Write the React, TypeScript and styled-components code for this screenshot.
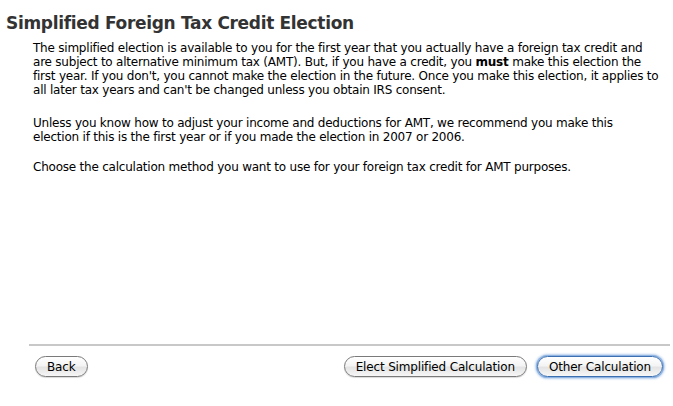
import React from 'react';
import styled, { createGlobalStyle } from 'styled-components';

const GlobalStyle = createGlobalStyle`
  html, body {
    margin: 0;
    padding: 0;
    background: #ffffff;
  }
  body {
    font-family: "DejaVu Sans", "Liberation Sans", sans-serif;
    color: #000;
  }
`;

const Page = styled.div`
  width: 673px;
  height: 406px;
  display: flex;
  flex-direction: column;
  box-sizing: border-box;
`;

const Title = styled.h1`
  margin: 0;
  padding: 12px 0 0 6px;
  font-size: 17px;
  font-weight: bold;
  letter-spacing: -0.32px;
  color: #333333;
  line-height: 22px;
`;

const Body = styled.div`
  flex: 1;
  padding: 7px 10px 0 33px;
`;

const Paragraph = styled.p<{ $gap?: number }>`
  margin: 0 0 ${(p) => p.$gap ?? 19}px;
  font-size: 12px;
  line-height: 14px;
  letter-spacing: -0.22px;
  white-space: nowrap;
`;

const Footer = styled.div`
  margin: 0 3px 0 29px;
  border-top: 2px solid #c8c8c8;
  padding: 10px 7px 29px 6px;
  display: flex;
  align-items: center;
  gap: 10px;
`;

const Spacer = styled.div`
  flex: 1;
`;

const Button = styled.button<{ $default?: boolean }>`
  height: 21px;
  padding: 0 11px;
  border-radius: 11px;
  font-family: "DejaVu Sans", "Liberation Sans", sans-serif;
  font-size: 12px;
  letter-spacing: -0.16px;
  color: #000;
  border: 1px solid ${(p) => (p.$default ? '#3b6fb0' : '#7a7a7a')};
  background: linear-gradient(#ffffff 0%, #f4f4f4 45%, #e4e4e4 55%, #f6f6f6 100%);
  box-shadow: ${(p) =>
    p.$default ? '0 0 0 1px #8fb4e3, 0 0 3px 1px #6b9bd8' : '0 1px 1px rgba(0,0,0,0.15)'};
`;

export default function App() {
  return (
    <Page>
      <GlobalStyle />
      <Title>Simplified Foreign Tax Credit Election</Title>
      <Body>
        <Paragraph>
          The simplified election is available to you for the first year that you actually have a foreign tax credit and
          <br />
          are subject to alternative minimum tax (AMT). But, if you have a credit, you <b>must</b> make this election the
          <br />
          first year. If you don't, you cannot make the election in the future. Once you make this election, it applies to
          <br />
          all later tax years and can't be changed unless you obtain IRS consent.
        </Paragraph>
        <Paragraph $gap={16}>
          Unless you know how to adjust your income and deductions for AMT, we recommend you make this
          <br />
          election if this is the first year or if you made the election in 2007 or 2006.
        </Paragraph>
        <Paragraph>
          Choose the calculation method you want to use for your foreign tax credit for AMT purposes.
        </Paragraph>
      </Body>
      <Footer>
        <Button>Back</Button>
        <Spacer />
        <Button>Elect Simplified Calculation</Button>
        <Button $default>Other Calculation</Button>
      </Footer>
    </Page>
  );
}
